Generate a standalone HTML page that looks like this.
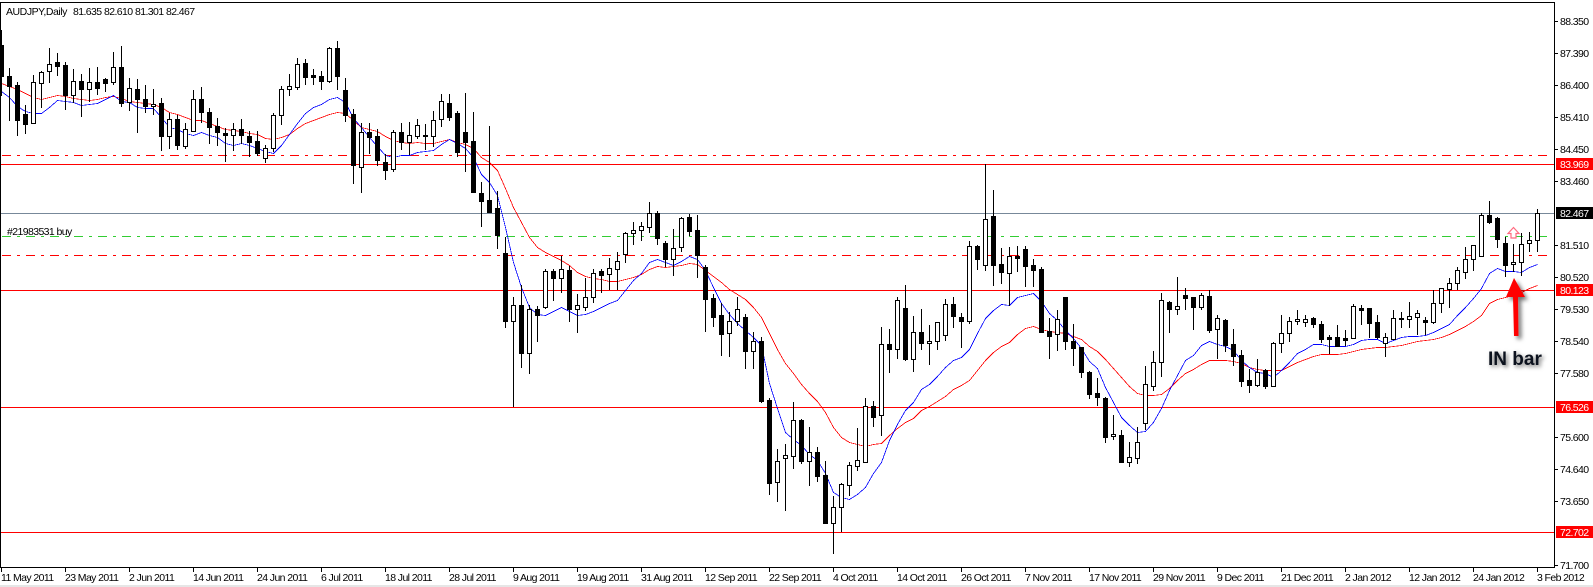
<!DOCTYPE html>
<html><head><meta charset="utf-8"><title>AUDJPY,Daily</title>
<style>
html,body{margin:0;padding:0;background:#fff;width:1593px;height:587px;overflow:hidden}
svg{display:block}
text{font-family:"Liberation Sans",sans-serif;font-size:10.5px;letter-spacing:-.6px;fill:#000}
.w{fill:#fff}
</style></head><body>
<svg width="1593" height="587" viewBox="0 0 1593 587" xmlns="http://www.w3.org/2000/svg">
<defs><filter id="sh" x="-60%" y="-20%" width="220%" height="150%"><feDropShadow dx="3" dy="3" stdDeviation="2.2" flood-color="#000" flood-opacity=".55"/></filter></defs>
<rect width="1593" height="587" fill="#fff"/>
<rect y="585" width="1593" height="2" fill="#e6e6e6"/>
<g shape-rendering="crispEdges" fill="none" stroke-width="1">
<path d="M2 155.5H1547M2 255.5H1547" stroke="#f00" stroke-dasharray="9 6 3 6"/>
<path d="M2 236.5H1547" stroke="#32cd32" stroke-dasharray="9 6 3 6"/>
<path d="M1 164.5H1554M1 290.5H1554M1 407.5H1554M1 532.5H1554" stroke="#f00"/>
<path d="M1 213.5H1554" stroke="#778899"/>
<g transform="translate(.5 .5)" stroke-width=".8">
<polyline stroke="#f00" points="1,83 9,86 17,89 25,93 33,97 41,99 49,97 57,95 65,96 73,98 81,99 89,100 97,99 105,97 113,96 121,98 129,101 137,102 145,103 153,104 161,107 169,112 177,114 185,117 193,120 201,120 209,123 217,126 225,129 233,130 241,131 249,133 257,134 265,138 273,139 281,137 289,134 297,128 305,123 313,120 321,117 329,114 337,112 345,113 353,120 361,127 369,129 377,131 385,136 393,140 401,142 409,143 417,142 425,143 433,143 441,141 449,139 457,142 465,144 473,148 481,157 489,162 497,170 505,188 513,207 521,222 529,237 537,247 545,252 553,256 561,260 569,265 577,272 585,276 593,278 601,279 609,281 617,281 625,279 633,277 641,274 649,269 657,266 665,267 673,266 681,265 689,263 697,264 705,270 713,276 721,282 729,289 737,294 745,299 753,307 761,317 769,333 777,349 785,363 793,373 801,384 809,393 817,401 825,412 833,427 841,437 849,442 857,444 865,446 873,444 881,443 889,435 897,428 905,422 913,418 921,410 929,406 937,401 945,396 953,389 961,385 969,380 977,370 985,360 993,352 1001,346 1009,342 1017,334 1025,328 1033,326 1041,329 1049,331 1057,332 1065,333 1073,336 1081,339 1089,346 1097,351 1105,359 1113,368 1121,377 1129,386 1137,393 1145,395 1153,395 1161,394 1169,388 1177,380 1185,373 1193,369 1201,364 1209,360 1217,360 1225,360 1233,361 1241,363 1249,367 1257,369 1265,370 1273,370 1281,370 1289,366 1297,362 1305,359 1313,356 1321,354 1329,354 1337,354 1345,353 1353,351 1361,349 1369,348 1377,347 1385,347 1393,346 1401,345 1409,343 1417,341 1425,340 1433,339 1441,337 1449,334 1457,330 1465,326 1473,321 1481,315 1489,303 1497,299 1505,297 1513,295 1521,292 1529,288 1537,285"/>
<polyline stroke="#00f" points="1,91 9,97 17,106 25,111 33,113 41,113 49,107 57,100 65,101 73,102 81,105 89,104 97,103 105,99 113,95 121,101 129,102 137,107 145,108 153,108 161,117 169,127 177,129 185,133 193,135 201,132 209,135 217,137 225,143 233,145 241,143 249,145 257,148 265,151 273,153 281,145 289,134 297,123 305,113 313,107 321,104 329,99 337,97 345,102 353,118 361,127 369,137 377,146 385,155 393,157 401,155 409,155 417,152 425,151 433,150 441,144 449,139 457,143 465,148 473,157 481,174 489,182 497,195 505,227 513,262 521,287 529,307 537,314 545,315 553,311 561,307 569,311 577,315 585,314 593,311 601,307 609,303 617,300 625,290 633,280 641,273 649,262 657,259 665,262 673,265 681,261 689,256 697,259 705,270 713,287 721,303 729,314 737,323 745,330 753,337 761,345 769,383 777,408 785,432 793,439 801,445 809,454 817,460 825,473 833,492 841,497 849,499 857,494 865,487 873,473 881,462 889,440 897,424 905,410 913,402 921,389 929,384 937,376 945,367 953,360 961,357 969,349 977,333 985,318 993,310 1001,304 1009,305 1017,297 1025,295 1033,293 1041,301 1049,313 1057,320 1065,330 1073,338 1081,348 1089,361 1097,368 1105,387 1113,402 1121,417 1129,425 1137,432 1145,431 1153,422 1161,408 1169,390 1177,375 1185,360 1193,355 1201,345 1209,341 1217,344 1225,346 1233,350 1241,360 1249,367 1257,372 1265,373 1273,377 1281,370 1289,362 1297,353 1305,349 1313,344 1321,344 1329,346 1337,346 1345,346 1353,344 1361,340 1369,339 1377,339 1385,343 1393,340 1401,337 1409,336 1417,336 1425,335 1433,332 1441,328 1449,324 1457,315 1465,307 1473,298 1481,288 1489,273 1497,268 1505,271 1513,271 1521,272 1529,267 1537,264"/>
</g>
<path stroke="#000" d="M1.5 30V96M9.5 68V121M17.5 82V136M25.5 105V134M33.5 75V124M41.5 71V108M49.5 48V83M57.5 53V76M65.5 62V110M73.5 69V103M81.5 74V117M89.5 68V102M97.5 67V95M105.5 78V92M113.5 52V85M121.5 46V107M129.5 78V111M137.5 79V133M145.5 85V113M153.5 89V115M161.5 98V151M169.5 113V149M177.5 115V150M185.5 123V149M193.5 90V132M201.5 87V123M209.5 108V144M217.5 118V146M225.5 128V162M233.5 123V151M241.5 119V144M249.5 131V157M257.5 131V156M265.5 145V163M273.5 113V152M281.5 86V125M289.5 74V96M297.5 58V90M305.5 59V85M313.5 69V85M321.5 71V90M329.5 47V83M337.5 41V90M345.5 78V122M353.5 109V184M361.5 123V193M369.5 123V154M377.5 129V166M385.5 154V180M393.5 130V172M401.5 123V150M409.5 122V155M417.5 119V139M425.5 124V150M433.5 111V147M441.5 94V127M449.5 94V121M457.5 111V157M465.5 93V172M473.5 112V193M481.5 182V227M489.5 126V213M497.5 191V249M505.5 237V328M513.5 297V407M521.5 285V368M529.5 305V374M537.5 306V342M545.5 269V309M553.5 269V301M561.5 256V293M569.5 266V322M577.5 294V333M585.5 278V311M593.5 269V303M601.5 269V293M609.5 258V290M617.5 252V290M625.5 232V263M633.5 222V245M641.5 222V241M649.5 202V233M657.5 211V245M665.5 241V267M673.5 229V276M681.5 217V252M689.5 214V236M697.5 215V278M705.5 265V332M713.5 294V327M721.5 303V356M729.5 312V357M737.5 297V326M745.5 314V369M753.5 332V369M761.5 337V403M769.5 398V495M777.5 449V502M785.5 444V511M793.5 402V469M801.5 419V464M809.5 427V486M817.5 447V482M825.5 461V523M833.5 496V554M841.5 483V532M849.5 462V496M857.5 428V471M865.5 398V462M873.5 401V427M881.5 327V436M889.5 329V373M897.5 297V359M905.5 285V361M913.5 316V372M921.5 309V350M929.5 325V365M937.5 322V350M945.5 299V341M953.5 297V328M961.5 313V348M969.5 241V324M977.5 245V270M985.5 164V271M993.5 190V286M1001.5 248V284M1009.5 247V306M1017.5 246V272M1025.5 246V287M1033.5 259V287M1041.5 267V332M1049.5 318V359M1057.5 310V351M1065.5 297V350M1073.5 324V366M1081.5 347V378M1089.5 371V399M1097.5 378V406M1105.5 397V443M1113.5 415V440M1121.5 430V463M1129.5 442V467M1137.5 427V464M1145.5 366V430M1153.5 351V391M1161.5 293V377M1169.5 301V333M1177.5 277V315M1185.5 288V310M1193.5 297V330M1201.5 293V310M1209.5 290V333M1217.5 315V359M1225.5 319V352M1233.5 329V366M1241.5 350V387M1249.5 369V393M1257.5 359V387M1265.5 369V389M1273.5 342V386M1281.5 315V353M1289.5 317V342M1297.5 310V325M1305.5 315V327M1313.5 317V328M1321.5 321V343M1329.5 335V354M1337.5 325V347M1345.5 330V346M1353.5 304V338M1361.5 305V325M1369.5 308V338M1377.5 315V339M1385.5 333V357M1393.5 310V339M1401.5 312V328M1409.5 302V328M1417.5 310V335M1425.5 317V335M1433.5 290V324M1441.5 288V313M1449.5 278V308M1457.5 267V290M1465.5 247V279M1473.5 245V271M1481.5 213V256M1489.5 201V224M1497.5 217V248M1505.5 237V277M1513.5 244V272M1521.5 233V276M1529.5 232V252M1537.5 209V252"/>
<path stroke="#000" stroke-width="5" d="M1.5 45V77M9.5 76V87M17.5 85V121M25.5 114V125M57.5 62V67M65.5 65V96M81.5 81V90M97.5 82V89M105.5 79V84M121.5 67V104M137.5 89V100M145.5 99V107M161.5 103V137M177.5 119V146M201.5 99V113M209.5 112V128M217.5 126V133M225.5 133V136M241.5 129V136M249.5 136V143M257.5 141V154M305.5 63V78M313.5 75V78M321.5 76V82M337.5 48V77M345.5 90V116M353.5 114V166M369.5 132V138M377.5 136V161M385.5 162V171M401.5 132V143M425.5 135V137M449.5 103V118M457.5 113V153M465.5 132V143M473.5 141V193M481.5 193V202M489.5 200V213M497.5 208V236M505.5 253V322M521.5 305V354M537.5 309V316M553.5 271V279M569.5 270V310M601.5 271V276M657.5 213V239M665.5 243V260M689.5 217V232M697.5 230V256M705.5 267V300M713.5 298V318M721.5 315V335M745.5 317V352M761.5 341V402M769.5 400V484M801.5 420V462M817.5 452V477M825.5 475V524M873.5 406V418M889.5 344V350M905.5 308V360M921.5 332V344M953.5 304V317M961.5 317V322M977.5 246V260M993.5 216V266M1001.5 264V273M1017.5 256V259M1025.5 249V267M1033.5 265V271M1041.5 269V333M1049.5 331V337M1065.5 297V342M1073.5 341V349M1081.5 347V373M1089.5 372V395M1097.5 393V398M1105.5 398V438M1121.5 435V463M1169.5 302V310M1185.5 295V299M1193.5 297V308M1209.5 296V331M1225.5 320V346M1233.5 344V357M1241.5 355V382M1249.5 380V386M1265.5 370V387M1313.5 318V325M1321.5 324V340M1329.5 337V340M1337.5 337V347M1345.5 338V341M1361.5 308V311M1369.5 308V324M1377.5 322V338M1401.5 318V320M1425.5 320V323M1489.5 215V223M1497.5 218V240M1505.5 243V266"/>
<path stroke="#000" fill="#fff" d="M31.5 82.5h4V123.5h-4zM39.5 72.5h4V83.5h-4zM47.5 64.5h4V71.5h-4zM71.5 81.5h4V95.5h-4zM87.5 82.5h4V89.5h-4zM111.5 67.5h4V82.5h-4zM127.5 88.5h4V102.5h-4zM151.5 104.5h4V106.5h-4zM167.5 119.5h4V136.5h-4zM183.5 129.5h4V146.5h-4zM191.5 99.5h4V131.5h-4zM231.5 129.5h4V135.5h-4zM263.5 148.5h4V158.5h-4zM271.5 115.5h4V148.5h-4zM279.5 89.5h4V115.5h-4zM287.5 86.5h4V89.5h-4zM295.5 64.5h4V87.5h-4zM327.5 48.5h4V81.5h-4zM359.5 132.5h4V167.5h-4zM391.5 132.5h4V169.5h-4zM407.5 135.5h4V142.5h-4zM415.5 125.5h4V136.5h-4zM431.5 120.5h4V136.5h-4zM439.5 101.5h4V119.5h-4zM511.5 305.5h4V321.5h-4zM527.5 309.5h4V353.5h-4zM543.5 271.5h4V307.5h-4zM559.5 269.5h4V278.5h-4zM575.5 305.5h4V309.5h-4zM583.5 297.5h4V307.5h-4zM591.5 273.5h4V297.5h-4zM607.5 268.5h4V274.5h-4zM615.5 261.5h4V269.5h-4zM623.5 233.5h4V254.5h-4zM631.5 230.5h4V233.5h-4zM639.5 226.5h4V230.5h-4zM647.5 213.5h4V227.5h-4zM671.5 248.5h4V259.5h-4zM679.5 218.5h4V247.5h-4zM727.5 321.5h4V333.5h-4zM735.5 309.5h4V321.5h-4zM751.5 341.5h4V351.5h-4zM775.5 461.5h4V482.5h-4zM783.5 455.5h4V458.5h-4zM791.5 420.5h4V456.5h-4zM807.5 452.5h4V461.5h-4zM831.5 507.5h4V523.5h-4zM839.5 484.5h4V507.5h-4zM847.5 465.5h4V485.5h-4zM855.5 460.5h4V466.5h-4zM863.5 406.5h4V462.5h-4zM879.5 344.5h4V415.5h-4zM895.5 300.5h4V349.5h-4zM911.5 332.5h4V359.5h-4zM927.5 341.5h4V343.5h-4zM935.5 322.5h4V341.5h-4zM943.5 304.5h4V335.5h-4zM967.5 246.5h4V321.5h-4zM983.5 219.5h4V265.5h-4zM1007.5 256.5h4V273.5h-4zM1055.5 319.5h4V334.5h-4zM1111.5 434.5h4V436.5h-4zM1127.5 457.5h4V462.5h-4zM1135.5 442.5h4V458.5h-4zM1143.5 384.5h4V423.5h-4zM1151.5 362.5h4V386.5h-4zM1159.5 300.5h4V362.5h-4zM1175.5 306.5h4V309.5h-4zM1199.5 295.5h4V307.5h-4zM1215.5 318.5h4V329.5h-4zM1255.5 372.5h4V385.5h-4zM1271.5 343.5h4V386.5h-4zM1279.5 333.5h4V343.5h-4zM1287.5 321.5h4V333.5h-4zM1295.5 319.5h4V321.5h-4zM1303.5 319.5h4V322.5h-4zM1351.5 306.5h4V338.5h-4zM1383.5 337.5h4V343.5h-4zM1391.5 318.5h4V339.5h-4zM1407.5 316.5h4V319.5h-4zM1415.5 313.5h4V317.5h-4zM1431.5 303.5h4V322.5h-4zM1439.5 288.5h4V303.5h-4zM1447.5 283.5h4V289.5h-4zM1455.5 270.5h4V283.5h-4zM1463.5 259.5h4V272.5h-4zM1471.5 245.5h4V259.5h-4zM1479.5 215.5h4V256.5h-4zM1511.5 262.5h4V264.5h-4zM1519.5 244.5h4V262.5h-4zM1527.5 240.5h4V243.5h-4zM1535.5 213.5h4V240.5h-4z"/>
<path stroke="#000" d="M0 2.5H1554.5M.5 2V567.5M0 567.5H1554.5M1554.5 2V568"/>
<path stroke="#000" d="M1555 21.5h3M1555 53.5h3M1555 85.5h3M1555 117.5h3M1555 149.5h3M1555 181.5h3M1555 245.5h3M1555 277.5h3M1555 309.5h3M1555 341.5h3M1555 373.5h3M1555 437.5h3M1555 469.5h3M1555 501.5h3M1555 565.5h3"/>
<path stroke="#000" d="M1.5 568v4M65.5 568v4M129.5 568v4M193.5 568v4M257.5 568v4M321.5 568v4M385.5 568v4M449.5 568v4M513.5 568v4M577.5 568v4M641.5 568v4M705.5 568v4M769.5 568v4M833.5 568v4M897.5 568v4M961.5 568v4M1025.5 568v4M1089.5 568v4M1153.5 568v4M1217.5 568v4M1281.5 568v4M1345.5 568v4M1409.5 568v4M1473.5 568v4M1537.5 568v4"/>
<rect x="1556" y="158" width="37" height="12" fill="#f00" stroke="none"/>
<rect x="1556" y="207" width="37" height="12" fill="#000" stroke="none"/>
<rect x="1556" y="284" width="37" height="12" fill="#f00" stroke="none"/>
<rect x="1556" y="401" width="37" height="12" fill="#f00" stroke="none"/>
<rect x="1556" y="526" width="37" height="12" fill="#f00" stroke="none"/>
</g>
<polygon points="1513.5,227.5 1519,233.5 1516,233.5 1516,238 1511,238 1511,233.5 1508,233.5" fill="#fff" stroke="#ff6b80" stroke-width="1.2"/>
<path d="M1514 278L1525 297L1518 297L1518.5 336L1514 336L1513 297L1506 297Z" fill="#f00" filter="url(#sh)"/>
<text x="1488" y="365" style="font-size:19px;font-weight:bold;letter-spacing:0;fill:#0c121e;filter:drop-shadow(2px 2px 2px rgba(0,0,0,.55))">IN bar</text>

<text x="6" y="15" style="letter-spacing:-.45px">AUDJPY,Daily</text>
<text x="73" y="15">81.635</text><text x="104" y="15">82.610</text><text x="135" y="15">81.301</text><text x="166" y="15">82.467</text>
<text x="7" y="235">#21983531 buy</text>

<text x="1560" y="25">88.350</text><text x="1560" y="57">87.390</text><text x="1560" y="89">86.400</text><text x="1560" y="121">85.410</text><text x="1560" y="153">84.450</text>
<text x="1560" y="168" class="w">83.969</text>
<text x="1560" y="185">83.460</text>
<text x="1560" y="217" class="w">82.467</text>
<text x="1560" y="249">81.510</text><text x="1560" y="281">80.520</text>
<text x="1560" y="294" class="w">80.123</text>
<text x="1560" y="313">79.530</text><text x="1560" y="345">78.540</text><text x="1560" y="377">77.580</text>
<text x="1560" y="411" class="w">76.526</text>
<text x="1560" y="441">75.600</text><text x="1560" y="473">74.640</text><text x="1560" y="505">73.650</text>
<text x="1560" y="536" class="w">72.702</text>
<text x="1560" y="569">71.700</text>

<text x="1" y="581">11 May 2011</text><text x="65" y="581">23 May 2011</text><text x="129" y="581">2 Jun 2011</text><text x="193" y="581">14 Jun 2011</text><text x="257" y="581">24 Jun 2011</text><text x="321" y="581">6 Jul 2011</text><text x="385" y="581">18 Jul 2011</text><text x="449" y="581">28 Jul 2011</text><text x="513" y="581">9 Aug 2011</text><text x="577" y="581">19 Aug 2011</text><text x="641" y="581">31 Aug 2011</text><text x="705" y="581">12 Sep 2011</text><text x="769" y="581">22 Sep 2011</text><text x="833" y="581">4 Oct 2011</text><text x="897" y="581">14 Oct 2011</text><text x="961" y="581">26 Oct 2011</text><text x="1025" y="581">7 Nov 2011</text><text x="1089" y="581">17 Nov 2011</text><text x="1153" y="581">29 Nov 2011</text><text x="1217" y="581">9 Dec 2011</text><text x="1281" y="581">21 Dec 2011</text><text x="1345" y="581">2 Jan 2012</text><text x="1409" y="581">12 Jan 2012</text><text x="1473" y="581">24 Jan 2012</text><text x="1537" y="581">3 Feb 2012</text>
</svg>
</body></html>
